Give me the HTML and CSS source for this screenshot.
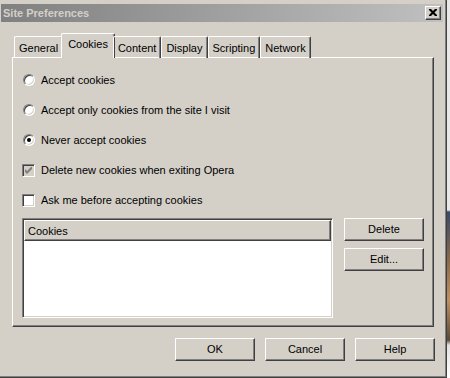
FILE: index.html
```html
<!DOCTYPE html>
<html>
<head>
<meta charset="utf-8">
<link rel="stylesheet" href="styles.css">
</head>
<body>
<div class="screen">
  <div class="dialog">
    <div class="titlebar">
      <span class="title">Site Preferences</span>
      <span class="close"><svg width="8" height="7" viewBox="0 0 8 7"><path d="M0 0h2l2 2 2-2h2v1l-2.5 2.5L8 6v1H6L4 5 2 7H0V6l2.5-2.5L0 1z" fill="#000"/></svg></span>
    </div>
    <div class="content">
      <div class="tabs">
        <div class="tab">General</div>
        <div class="tab active">Cookies</div>
        <div class="tab">Content</div>
        <div class="tab">Display</div>
        <div class="tab">Scripting</div>
        <div class="tab">Network</div>
      </div>
      <div class="panel">
        <div class="option"><span class="radio"></span><span>Accept cookies</span></div>
        <div class="option"><span class="radio"></span><span>Accept only cookies from the site I visit</span></div>
        <div class="option"><span class="radio checked"></span><span>Never accept cookies</span></div>
        <div class="option"><span class="check disabled"><svg width="7" height="7" viewBox="0 0 7 7"><path d="M0 2v3l2 2 5-5V-1L2 4z" fill="#808080"/></svg></span><span>Delete new cookies when exiting Opera</span></div>
        <div class="option"><span class="check"></span><span>Ask me before accepting cookies</span></div>
        <div class="listrow">
          <div class="list">
            <div class="listhead">Cookies</div>
            <div class="listbody"></div>
          </div>
          <div class="sidebtns">
            <div class="btn">Delete</div>
            <div class="btn">Edit...</div>
          </div>
        </div>
      </div>
      <div class="footer">
        <div class="btn">OK</div>
        <div class="btn">Cancel</div>
        <div class="btn">Help</div>
      </div>
    </div>
  </div>
  <div class="edge"></div>
</div>
</body>
</html>
```

FILE: styles.css
```css
* { box-sizing: border-box; }
html, body { margin: 0; padding: 0; }
body {
  width: 450px;
  height: 378px;
  overflow: hidden;
  font-family: "Liberation Sans", Arial, sans-serif;
  font-size: 11px;
  color: #000;
  background: #d4d0c8;
}
.screen { display: flex; width: 450px; height: 378px; }
.dialog {
  width: 447px;
  height: 378px;
  background: #d4d0c8;
  border-right: 1px solid #404040;
  border-bottom: 1px solid #404040;
  box-shadow: inset -1px -1px 0 #808080;
  padding: 4px 3px 0 1px;
  display: flex;
  flex-direction: column;
}
.edge {
  width: 3px;
  height: 378px;
  background: linear-gradient(#e8e8e8 0, #e8e8e8 210px, #3a4a6a 212px, #8a6a4a 260px, #c09060 300px, #5a4a3a 340px, #e0e0e0 345px, #fff 378px);
}
.titlebar {
  height: 18px;
  background: linear-gradient(to right, #808080, #c0c0c0);
  display: flex;
  align-items: center;
  justify-content: space-between;
  padding: 0 2px 0 2px;
}
.title {
  color: #d4d0c8;
  font-weight: bold;
  font-size: 11px;
}
.close {
  width: 16px;
  height: 14px;
  background: #d4d0c8;
  border-top: 1px solid #fff;
  border-left: 1px solid #fff;
  border-right: 1px solid #404040;
  border-bottom: 1px solid #404040;
  box-shadow: inset -1px -1px 0 #808080;
  display: flex;
  align-items: center;
  justify-content: center;
  padding-bottom: 1px;
}
.close svg { display: block; }
.content {
  padding: 12px 0 0 11px;
  display: flex;
  flex-direction: column;
}
.tabs {
  display: flex;
  align-items: flex-end;
  padding-left: 2px;
  height: 24px;
  position: relative;
  z-index: 1;
  margin-bottom: -1px;
}
.tab {
  height: 22px;
  padding: 0 4px;
  display: flex;
  align-items: center;
  border-top: 1px solid #fff;
  border-left: 1px solid #fff;
  border-right: 1px solid #404040;
  box-shadow: inset -1px 0 0 #808080;
  border-radius: 2px 2px 0 0;
  padding-top: 1px;
}
.tab.active {
  height: 25px;
  margin: 0 -2px;
  padding: 0 6px 4px;
  background: #d4d0c8;
  align-items: center;
}
.panel {
  width: 422px;
  height: 270px;
  border-top: 1px solid #fff;
  border-left: 1px solid #fff;
  border-right: 1px solid #404040;
  border-bottom: 1px solid #404040;
  box-shadow: inset -1px -1px 0 #808080;
  padding: 7px 0 0 9px;
  display: flex;
  flex-direction: column;
}
.option {
  height: 30px;
  display: flex;
  align-items: center;
  gap: 6px;
}
.radio {
  width: 12px;
  height: 12px;
  border-radius: 50%;
  border: 1px solid;
  border-color: #808080 #fff #fff #808080;
  box-shadow: inset 1px 1px 0 #404040, inset -1px -1px 0 #d4d0c8;
  background: #fff;
  display: flex;
  align-items: center;
  justify-content: center;
  margin-left: 1px;
}
.radio.checked::after {
  content: "";
  width: 4px;
  height: 4px;
  border-radius: 50%;
  background: #000;
}
.check {
  width: 13px;
  height: 13px;
  border: 1px solid;
  border-color: #808080 #fff #fff #808080;
  box-shadow: inset 1px 1px 0 #404040, inset -1px -1px 0 #d4d0c8;
  background: #fff;
  display: flex;
  align-items: center;
  justify-content: center;
}
.check.disabled { background: #d4d0c8; }
.check svg { display: block; }
.listrow {
  display: flex;
  margin-top: 3px;
}
.list {
  width: 311px;
  height: 100px;
  border: 1px solid;
  border-color: #808080 #fff #fff #808080;
  box-shadow: inset 1px 1px 0 #404040, inset -1px -1px 0 #d4d0c8;
  background: #fff;
  padding: 2px;
  display: flex;
  flex-direction: column;
}
.listhead {
  height: 21px;
  margin: -1px -1px 0;
  background: #d4d0c8;
  border-top: 1px solid #fff;
  border-left: 1px solid #fff;
  border-right: 1px solid #404040;
  border-bottom: 1px solid #404040;
  box-shadow: inset -1px -1px 0 #808080;
  display: flex;
  align-items: center;
  padding-left: 3px;
}
.listbody { flex: 1; }
.sidebtns {
  margin-left: 11px;
  display: flex;
  flex-direction: column;
  gap: 7px;
}
.btn {
  width: 80px;
  height: 23px;
  background: #d4d0c8;
  border-top: 1px solid #fff;
  border-left: 1px solid #fff;
  border-right: 1px solid #404040;
  border-bottom: 1px solid #404040;
  box-shadow: inset -1px -1px 0 #808080;
  display: flex;
  align-items: center;
  justify-content: center;
  padding-bottom: 1px;
}
.footer {
  display: flex;
  justify-content: flex-end;
  gap: 10px;
  margin-top: 11px;
  width: 423px;
}
```
